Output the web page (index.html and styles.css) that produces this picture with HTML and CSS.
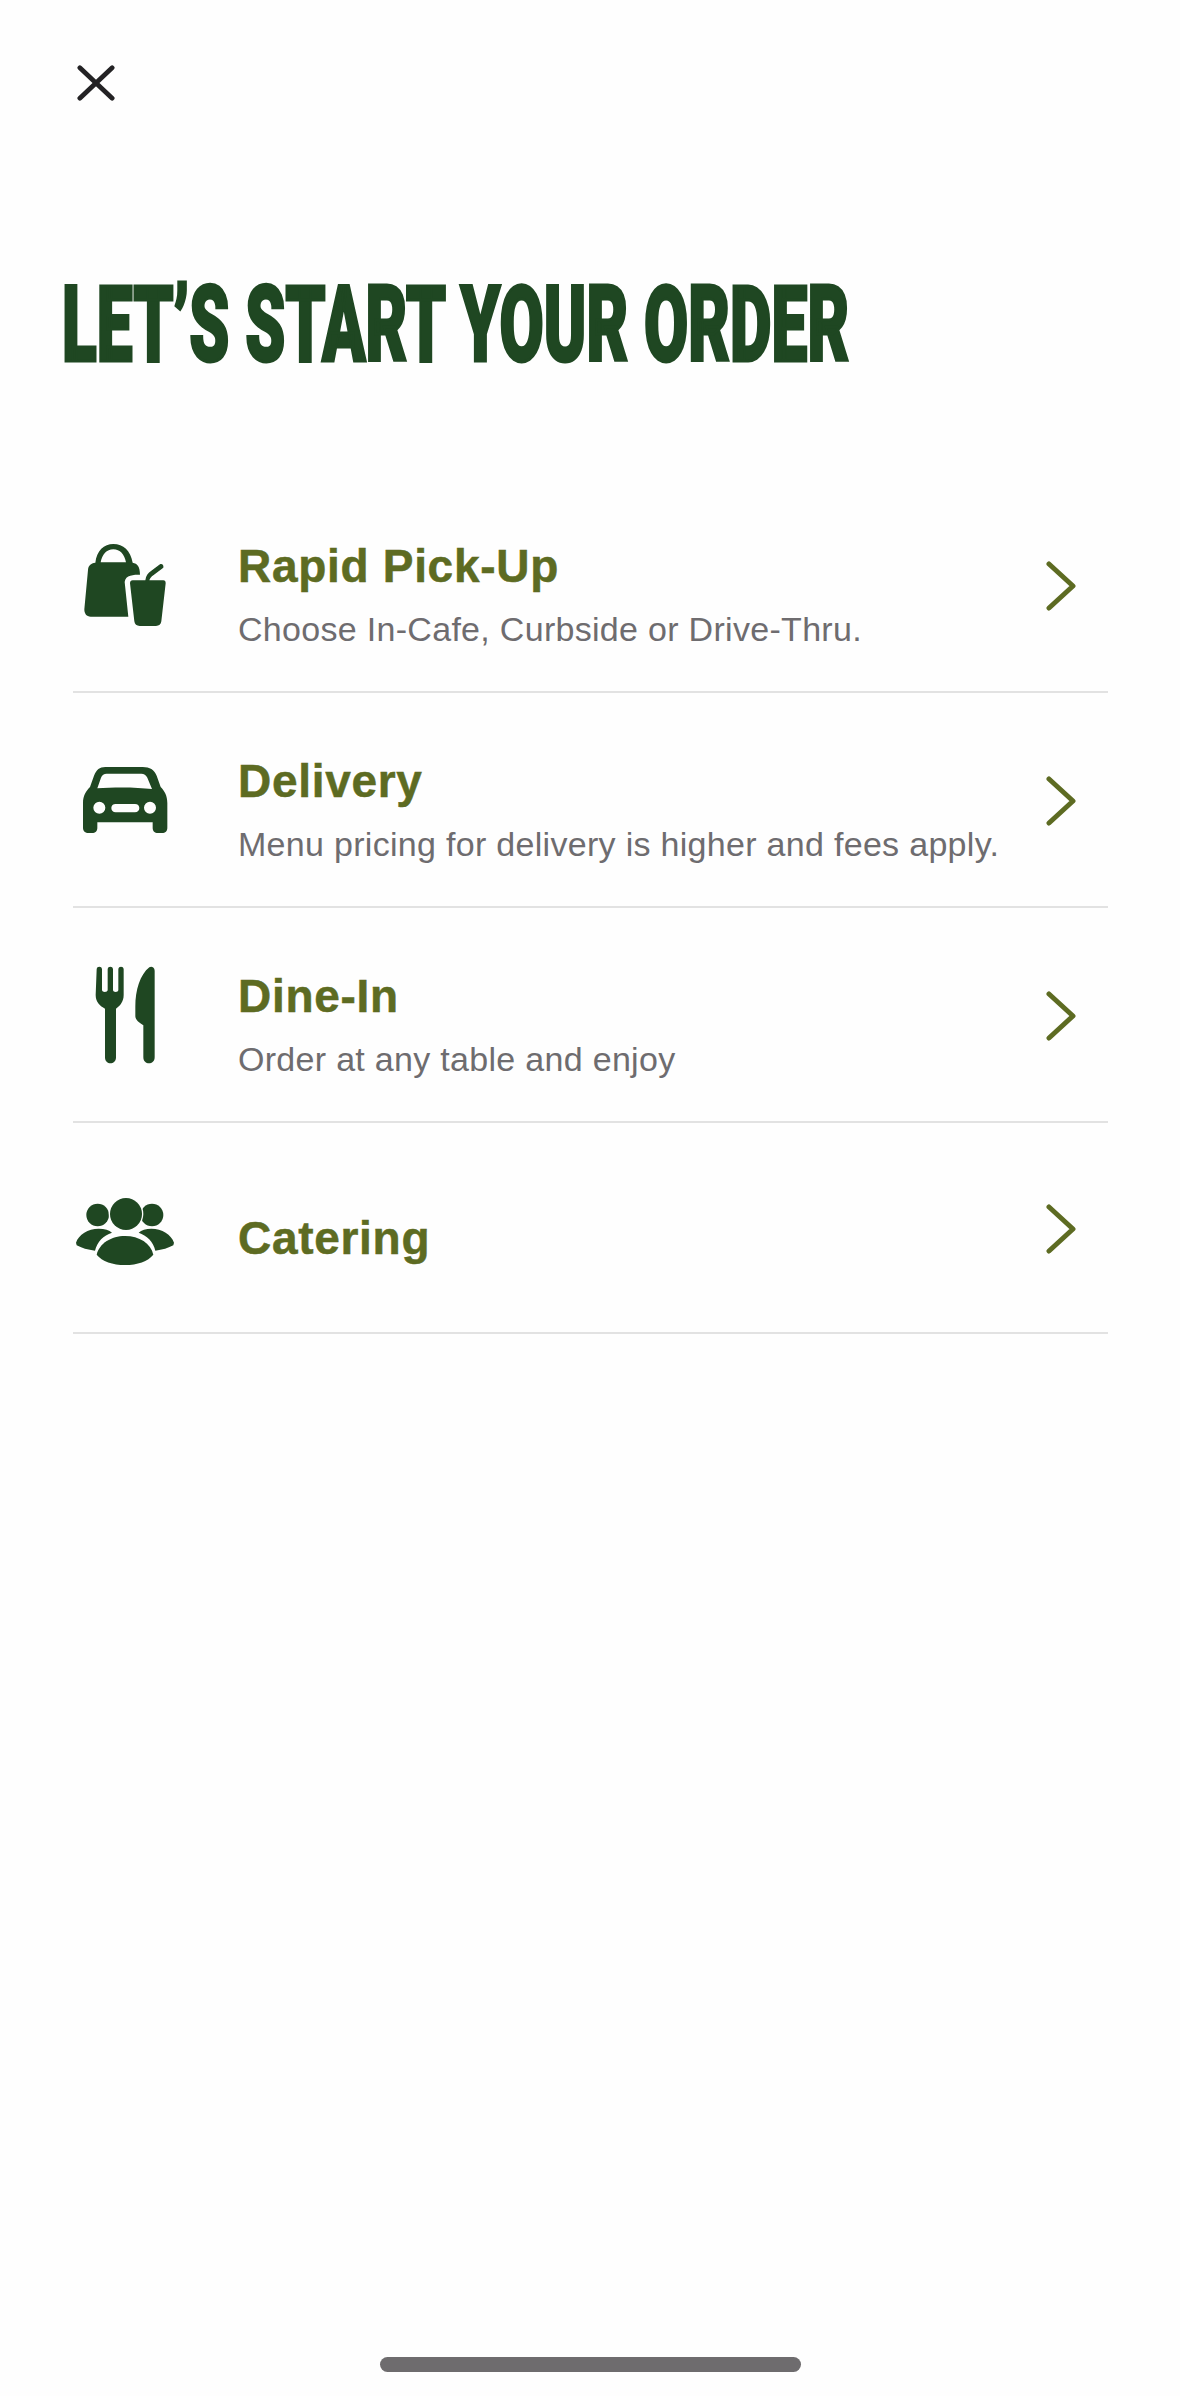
FILE: index.html
```html
<!DOCTYPE html>
<html lang="en">
<head>
<meta charset="utf-8">
<title>Let's start your order</title>
<link rel="stylesheet" href="styles.css">
</head>
<body>
<main class="page">
  <button class="close" aria-label="Close">
    <svg class="close-icon" viewBox="0 0 40 38"><path d="M3 3L37 35M37 3L3 35"/></svg>
  </button>
  <h1 class="heading"><span class="heading-text">LET’S START YOUR ORDER</span></h1>
  <ul class="list">
    <li class="row">
      <svg class="icon" viewBox="48 45 300 300">
        <path fill-rule="evenodd" d="M106 128C110 92 132 72 160 72C190 72 212 92 218 128C232 130 240 140 240 164C222 164 196 164 194 186L205 290H92C80 290 73 282 73 268L84 150C85 136 92 130 106 128ZM122 127H198C194 104 180 88 160 88C140 88 126 104 122 127Z"/>
        <path d="M210 190C210 184 213 181 218 181H256C258 166 264 158 274 152L300 133C306 130 312 136 310 143L280 166C274 170 270 174 268 181H310C315 181 317 184 317 190L304 304C303 313 297 318 288 318H239C230 318 224 313 223 304Z"/>
      </svg>
      <div class="text">
        <h2 class="title">Rapid Pick-Up</h2>
        <p class="sub">Choose In-Cafe, Curbside or Drive-Thru.</p>
      </div>
      <svg class="chevron" viewBox="0 0 30 50"><path d="M3 3L27 25L3 47"/></svg>
    </li>
    <li class="row">
      <svg class="icon" viewBox="48 693 300 300">
        <path fill-rule="evenodd" d="M136 744H248C270 744 282 752 290 770L302 804C314 816 322 830 322 852V926C322 936 316 942 306 942H294C284 942 278 936 278 926V910H112V926C112 936 106 942 96 942H86C76 942 69 936 69 926V852C69 830 78 816 90 804L102 770C110 752 118 744 136 744ZM112 808C160 804 230 804 276 810L262 776C258 768 252 764 244 764H140C132 764 126 768 123 776ZM118 848A18 18 0 1 0 118 884A18 18 0 1 0 118 848ZM270 848A18 18 0 1 0 270 884A18 18 0 1 0 270 848ZM167 855C159 855 154 860 154 867C154 874 159 880 167 880H225C233 880 238 874 238 867C238 860 233 855 225 855Z"/>
      </svg>
      <div class="text">
        <h2 class="title">Delivery</h2>
        <p class="sub">Menu pricing for delivery is higher and fees apply.</p>
      </div>
      <svg class="chevron" viewBox="0 0 30 50"><path d="M3 3L27 25L3 47"/></svg>
    </li>
    <li class="row">
      <svg class="icon" viewBox="48 75 300 300">
        <path d="M110 88C110 78 126 78 126 88V150C126 158 143 158 143 150V88C143 78 159 78 159 88V150C159 158 175 158 175 150V88C175 78 191 78 191 88V165C191 185 180 198 168 206V352C168 376 135 376 135 352V206C120 198 107 186 107 165Z"/>
        <path d="M284 92V352C284 376 250 376 250 352V256C238 248 226 240 226 228V200C226 150 240 104 268 82C274 78 284 82 284 92Z"/>
      </svg>
      <div class="text">
        <h2 class="title">Dine-In</h2>
        <p class="sub">Order at any table and enjoy</p>
      </div>
      <svg class="chevron" viewBox="0 0 30 50"><path d="M3 3L27 25L3 47"/></svg>
    </li>
    <li class="row row-last">
      <svg class="icon" viewBox="48 714 300 300">
        <circle cx="113" cy="825" r="34"/>
        <circle cx="276" cy="825" r="34"/>
        <circle cx="198" cy="822" r="52" class="halo"/>
        <circle cx="198" cy="822" r="48"/>
        <path d="M48 908C56 884 84 866 116 866C134 866 148 870 156 878C130 886 112 904 105 932C84 930 64 924 50 916Z"/>
        <path d="M342 908C334 884 306 866 274 866C258 866 244 870 236 878C260 886 280 904 286 932C306 930 326 924 340 916Z"/>
        <path d="M110 944C118 910 154 888 195 888C238 888 272 910 280 944C264 964 232 975 195 975C158 975 126 964 110 944Z"/>
      </svg>
      <div class="text text-single">
        <h2 class="title">Catering</h2>
      </div>
      <svg class="chevron" viewBox="0 0 30 50"><path d="M3 3L27 25L3 47"/></svg>
    </li>
  </ul>
  <div class="home-bar"></div>
</main>
</body>
</html>
```

FILE: styles.css
```css
* {
  box-sizing: border-box;
}

html,
body {
  margin: 0;
  padding: 0;
}

body {
  background: #fefefe;
  font-family: "Liberation Sans", Arial, sans-serif;
}

.page {
  height: 2396px;
  display: flex;
  flex-direction: column;
  overflow: hidden;
}

.close {
  align-self: flex-start;
  margin: 64px 0 0 77px;
  padding: 0;
  border: 0;
  background: none;
  width: 38px;
  height: 38px;
}

.close-icon {
  display: block;
  width: 38px;
  height: 38px;
  fill: none;
  stroke: #232224;
  stroke-width: 5;
  stroke-linecap: round;
}

.heading {
  margin: 185px 0 0 62px;
  height: 78px;
  line-height: 78px;
  font-family: Roboto, Inter, sans-serif;
  font-size: 105px;
  font-weight: 900;
  color: #1f4722;
  white-space: nowrap;
}

.heading-text {
  display: inline-block;
  transform: scaleX(0.61);
  transform-origin: left center;
  -webkit-text-stroke: 3px #1f4722;
}

.list {
  list-style: none;
  margin: 113px 0 0;
  padding: 0 72px 0 73px;
}

.row {
  display: flex;
  align-items: center;
  height: 215px;
  border-bottom: 2px solid #e2e2e2;
}

.row-last {
  height: 211px;
}

.icon {
  flex: none;
  width: 100px;
  height: 100px;
  margin-left: 3px;
  fill: #1f4722;
}

.halo {
  fill: #fefefe;
}

.text {
  flex: 1;
  margin-left: 62px;
  padding-top: 20px;
}

.text-single {
  padding-top: 20px;
}

.title {
  margin: 0;
  font-size: 46px;
  line-height: 50px;
  font-weight: 700;
  letter-spacing: 0.7px;
  color: #5d6b22;
  -webkit-text-stroke: 0.5px #5d6b22;
}

.sub {
  margin: 19px 0 0;
  font-size: 34px;
  line-height: 38px;
  letter-spacing: 0.3px;
  color: #6e6c6f;
}

.chevron {
  flex: none;
  width: 30px;
  height: 50px;
  margin-top: 2px;
  margin-right: 32px;
  fill: none;
  stroke: #5d6b22;
  stroke-width: 5;
  stroke-linecap: round;
  stroke-linejoin: round;
}

.home-bar {
  align-self: center;
  width: 421px;
  height: 15px;
  margin-top: auto;
  margin-bottom: 24px;
  border-radius: 8px;
  background: #6e6c6e;
}
```
